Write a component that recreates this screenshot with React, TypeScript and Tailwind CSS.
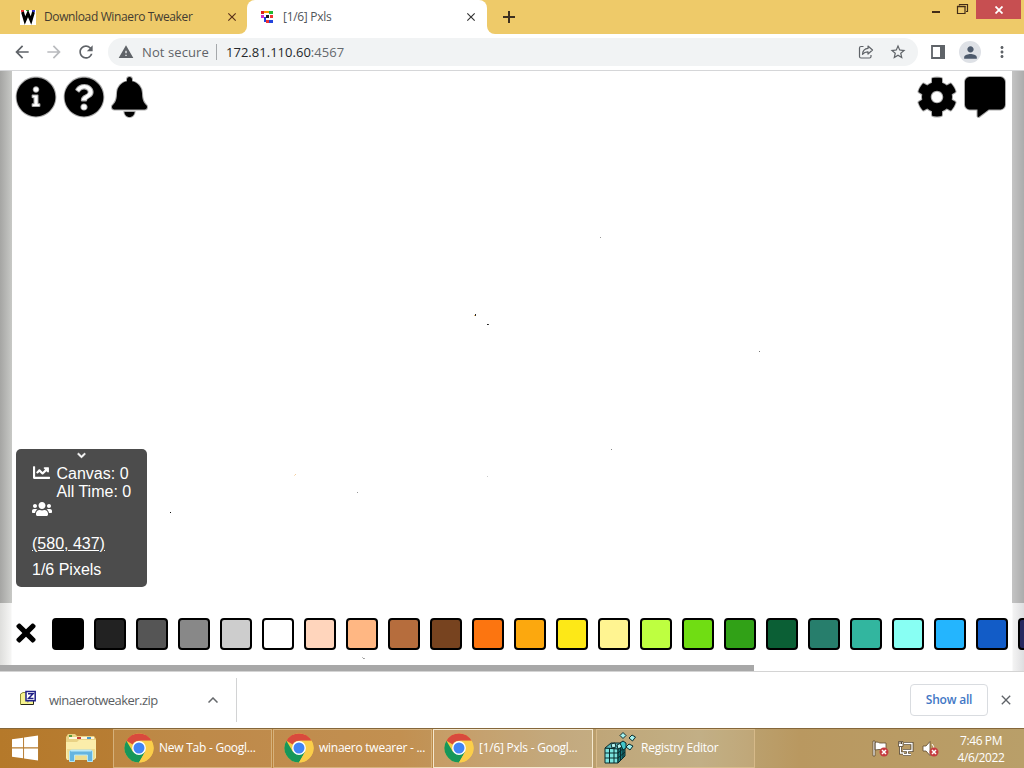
import type { ReactNode } from "react";
import {
  FaBell,
  FaChartLine,
  FaChevronDown,
  FaCog,
  FaCommentAlt,
  FaInfoCircle,
  FaQuestionCircle,
  FaTimes,
  FaUsers,
} from "react-icons/fa";
import { MdArrowBack, MdArrowForward, MdClose, MdMoreVert, MdPerson, MdRefresh, MdStarBorder, MdWarning } from "react-icons/md";

const palette = [
  "#000000", "#222222", "#555555", "#888888", "#cdcdcd", "#ffffff",
  "#ffd5bc", "#ffb783", "#b66d3d", "#77431f", "#fc7510", "#fca80e",
  "#fde817", "#fff491", "#beff40", "#70dd13", "#31a117", "#0b5f35",
  "#277e6c", "#32b69f", "#88fff3", "#24b5fe", "#125cc7", "#262960",
];

const pixels = [
  { x: 600, y: 237, color: "#999" },
  { x: 475, y: 314, color: "#222" },
  { x: 475, y: 315, color: "#333" },
  { x: 474, y: 315, color: "#eebb66" },
  { x: 487, y: 324, color: "#222" },
  { x: 488, y: 324, color: "#444" },
  { x: 759, y: 351, color: "#777" },
  { x: 611, y: 449, color: "#888" },
  { x: 295, y: 474, color: "#f5cfa0" },
  { x: 294, y: 475, color: "#fae0c0" },
  { x: 487, y: 476, color: "#ccc" },
  { x: 357, y: 492, color: "#999" },
  { x: 170, y: 512, color: "#111" },
  { x: 362, y: 657, color: "#bbb" },
  { x: 363, y: 658, color: "#999" },
  { x: 364, y: 658, color: "#aaa" },
];

function WinaeroIcon() {
  return (
    <svg className="w-4 h-4 shrink-0" viewBox="0 0 16 16">
      <path fill="#fff" d="M0 1h16v15H0z" />
      <path fill="#e33" d="M1 1h3v2H1z" />
      <path fill="#3b3" d="M6 1h3v1H6z" />
      <path fill="#33c" d="M12 1h3v2h-3z" />
      <path fill="none" stroke="#000" strokeWidth="2.9" d="M2.500 3l2.500 8.500L8 4.500l3 7L13.500 3" />
    </svg>
  );
}

function PxlsIcon() {
  return (
    <svg className="w-3 h-3 shrink-0" viewBox="0 0 12 12">
      <path fill="#d22" d="M0 0h3v3H0z" />
      <path fill="#f90" d="M3 0h5v2H3z" />
      <path fill="#2b3" d="M8 0h4v3H8z" />
      <path fill="#c3c" d="M0 4h3v3H0z" />
      <path fill="#24d" d="M3 6h2v5H3zM8 9h4v3H8z" />
      <path fill="#222" d="M5 4h3v3H5z" />
      <path fill="#e33" d="M9 4h3v3H9zM5 9h3v3H5z" />
    </svg>
  );
}

function ChromeIcon() {
  return (
    <svg className="w-[30px] h-[30px] shrink-0" viewBox="0 0 30 30">
      <circle cx="15" cy="15" r="14.5" fill="#f9cb45" />
      <path fill="#d94a3d" d="M2.4 7.7A14.5 14.5 0 0 1 27.6 7.7H15a7.3 7.3 0 0 0-6.3 3.7z" />
      <path fill="#16975a" d="M2.4 7.7A14.5 14.5 0 0 0 15 29.5L21.3 18.6H15L8.7 18.6z" />
      <path fill="#fbce4a" d="M27.6 7.7A14.5 14.5 0 0 1 15 29.5L21.3 18.6A7.3 7.3 0 0 0 15 7.7z" />
      <circle cx="15" cy="15" r="6.9" fill="#fff" />
      <circle cx="15" cy="15" r="5.5" fill="#4285f4" />
    </svg>
  );
}

function WindowsIcon() {
  return (
    <svg className="w-[27px] h-[26px]" viewBox="0 0 28 26" fill="#fff">
      <path d="M0 4l11.500-1.700v10H0zM12.500 2.100L27 0v12.300H12.500zM0 13.500h11.500v10L0 22zM12.500 13.500H27V26l-14.500-2.200z" />
    </svg>
  );
}

function FolderIcon() {
  return (
    <svg className="w-8 h-[30px]" viewBox="0 0 32 30">
      <path fill="#e9d285" d="M1 4l2-3h7l2 2h17l2 3v19H1z" />
      <path fill="#fff8dd" d="M4 4h25v2H4z" />
      <path fill="#5b9a3c" d="M4 2h3v2H4z" />
      <path fill="#c7443a" d="M12 4h4v2h-4z" />
      <path fill="#4a99c9" d="M22 4h4v2h-4z" />
      <path fill="#fbedaa" d="M1 9h11l2-2h17v18l-2 2H2l-1-2z" />
      <path fill="#eedd91" d="M2 16h28v9l-2 2H3z" />
      <path fill="#65b4e0" stroke="#b5e7f7" d="M4.500 28.500V19q0-2 2-2h19q2 0 2 2v9.500h-5V22h-13v6.500z" />
      <path fill="#bce9f8" d="M6 17h20v1.500H6z" />
    </svg>
  );
}

function RegistryIcon() {
  return (
    <svg className="w-8 h-8 shrink-0" viewBox="0 0 32 32" stroke="#082b2c" strokeWidth="1" strokeLinejoin="round">
      <path fill="#7be3df" d="M1 16h13v15H1z" />
      <path fill="#187779" d="M14 17l7-6v13l-7 7z" />
      <path fill="#5cb9bd" d="M1 16l6-5 14 0-7 6z" />
      <path fill="none" d="M5.500 16v15M10 16v15M1 21h13l7-6M1 26h13l7-6M16.500 15v13M19 13v13" />
      <path fill="#b6f5f0" d="M7 12l4-1 1 4-4 1zM13 13l4-2 1 4-4 2z" />
      <path fill="#a5f2f0" d="M16 3.500l3-3 3 3-3 3zM25 6l3-3 3.500 2-3 4zM22 15l3-3 4 2-3 4z" />
      <path fill="#43c5c9" d="M16 11l3-2 3 2v5l-3 2z" />
    </svg>
  );
}

function ZipIcon() {
  return (
    <svg className="w-4 h-4 shrink-0" viewBox="0 0 16 16">
      <path fill="#f6f390" stroke="#8b8b35" d="M.5 4L3 2.500h5V14.500H.5z" />
      <path fill="#f6f390" stroke="#26261a" d="M1 14.500h12.500V11" />
      <path fill="#fff" stroke="#202087" strokeWidth="1.500" d="M6 1.500h9.200v9.200H6z" />
      <path fill="none" stroke="#202087" strokeWidth="1.500" d="M8 3.700h5L8.500 8.500h5" />
    </svg>
  );
}

function RedBadge() {
  return (
    <g>
      <circle cx="12" cy="12" r="4.500" fill="#c63d40" />
      <path stroke="#fff" strokeWidth="1.500" d="M10 10l4 4M14 10l-4 4" />
    </g>
  );
}

function TrayIcons() {
  return (
    <div className="flex items-center gap-2">
      <svg className="w-[17px] h-[17px]" viewBox="0 0 17 17">
        <path fill="#fff" stroke="#5e4a30" strokeWidth=".8" d="M1 1h2v15H1zM3 2.500c3-1.500 4 1 6 .5 2 0 3 0 5 0v7c-4 1-4-1-7-.5L3 10z" />
        <RedBadge />
      </svg>
      <svg className="w-[17px] h-[17px]" viewBox="0 0 17 17" fill="none">
        <path stroke="#574832" strokeWidth="3" d="M7 3.500h8v7H6M10.500 11v3M6 14.500h8M3.500 7v6H7" />
        <path stroke="#fff" strokeWidth="1.300" d="M7 3.500h8v7H6M10.500 11v3M6 14.500h8M3.500 7v6H7" />
        <path fill="#fff" stroke="#574832" strokeWidth=".8" d="M1.500 1.500h4.500v5H1.500z" />
        <path stroke="#574832" d="M3 2v2M4.500 2v2" />
      </svg>
      <svg className="w-[17px] h-[17px]" viewBox="0 0 17 17">
        <path fill="#fff" stroke="#5e4a30" strokeWidth=".8" d="M1 6h3l4-4.500v14L4 11H1z" />
        <path fill="none" stroke="#fff" d="M10 4q2 2 2 5" />
        <RedBadge />
      </svg>
    </div>
  );
}

function BrowserTabs() {
  return (
    <div className="h-[34px] flex bg-white text-[#443c31] text-[12px]">
      <div className="w-[247px] flex items-center pl-5 pr-2 bg-[#eeca69] rounded-br-lg">
        <WinaeroIcon />
        <span className="ml-2 grow whitespace-nowrap tracking-[-0.37px]">Download Winaero Tweaker</span>
        <MdClose className="w-3.5 h-3.5 text-[#59301b]" />
      </div>
      <div className="w-[240px] bg-[#eeca69]">
        <div className="h-full flex items-center pl-[14px] pr-[9px] bg-white rounded-t-lg text-[#51555a]">
          <PxlsIcon />
          <span className="ml-2.5 grow tracking-[-0.3px]">[1/6] Pxls</span>
          <MdClose className="w-3.5 h-3.5 text-[#333]" />
        </div>
      </div>
      <div className="grow flex bg-[#eeca69] rounded-bl-lg">
        <svg className="w-3.5 h-3.5 mt-[10px] ml-[15px]" viewBox="0 0 14 14">
          <path stroke="#3d3020" strokeWidth="2" d="M7 1v12M1 7h12" />
        </svg>
        <div className="ml-auto mr-[3px] flex">
          <svg className="w-10 h-[19px]" viewBox="0 0 40 19" fill="none" stroke="#422c18">
            <path strokeWidth="2" d="M0 12h8" />
            <path strokeWidth="1.200" d="M25.500 6.500h7.500v7h-7.500zM27.500 5.500V4.500h8v7H34" />
            <path strokeWidth="1.500" d="M25 6.500h8.500" />
          </svg>
          <div className="w-[45px] h-[19px] ml-1 flex justify-center items-center bg-[#c74f51]">
            <svg className="w-2 h-2" viewBox="0 0 8 8" stroke="#fff" strokeWidth="1.800">
              <path d="M.5.5l7 7M7.500.5l-7 7" />
            </svg>
          </div>
        </div>
      </div>
    </div>
  );
}

function Toolbar() {
  return (
    <div className="h-[37px] flex items-center bg-white border-b border-[#d5d6d8] text-[#5f6368]">
      <MdArrowBack className="w-5 h-5 ml-3 shrink-0" />
      <MdArrowForward className="w-5 h-5 ml-3 shrink-0 text-[#b9bbbe]" />
      <MdRefresh className="w-5 h-5 ml-3 shrink-0" />
      <div className="h-7 grow ml-3 rounded-full bg-[#f1f3f4] flex items-center pl-[10px] pr-[11px]">
        <MdWarning className="w-4 h-4" />
        <span className="ml-2 mt-px w-[67px] whitespace-nowrap text-[13px] tracking-[0.1px]">Not secure</span>
        <span className="ml-[7px] w-px h-4 bg-[#a5a8ab]" />
        <span className="ml-[9px] mt-px text-[13px] tracking-[0.02px] text-[#25282b]">
          172.81.110.60<span className="text-[#65696d]">:4567</span>
        </span>
        <svg className="w-4 h-4 ml-auto" viewBox="0 0 16 16" fill="none" stroke="currentColor" strokeWidth="1.200" strokeLinejoin="round">
          <path d="M5.500 2.500H3Q1.500 2.500 1.500 4v8.500Q1.500 14 3 14h8.500q1.500 0 1.500-1.500V11" />
          <path d="M10 2l4.500 4-4.500 4V7.800C7.500 7.600 6 8.500 4.500 10.300 4.700 7 6.800 4.700 10 4.400z" />
        </svg>
        <MdStarBorder className="w-[18px] h-[18px] ml-[15px]" />
      </div>
      <svg className="w-3.5 h-3.5 ml-[13px]" viewBox="0 0 14 14">
        <path fill="none" stroke="currentColor" strokeWidth="1.800" d="M1 1h12v12H1z" />
        <path fill="currentColor" d="M9 0h5v14H9z" />
      </svg>
      <div className="w-[22px] h-[22px] ml-[14px] rounded-full bg-[#dee1e6] flex items-center justify-center">
        <MdPerson className="w-[19px] h-[19px] text-[#4d5a6c]" />
      </div>
      <MdMoreVert className="w-[18px] h-[18px] ml-[12px] mr-[13px]" />
    </div>
  );
}

const overlayIcon = "overflow-visible [paint-order:stroke] stroke-[#aaa] [stroke-width:26px]";

function StatsPanel() {
  return (
    <div className="w-[131px] h-[138px] ml-4 rounded-[5px] bg-[#4c4c4c] text-white text-[16px] leading-[18px] whitespace-nowrap">
      <div className="h-4 flex justify-center pt-[2px]">
        <FaChevronDown className="w-[9px] h-[9px] stroke-white [stroke-width:40px]" />
      </div>
      <div className="flex pl-[17px]">
        <FaChartLine className="w-[17px] h-[17px] -mt-px" />
        <div className="ml-[6.5px]">
          <div>Canvas: 0</div>
          <div>All Time: 0</div>
        </div>
      </div>
      <FaUsers className="w-5 h-5 ml-4 -mt-[2px]" />
      <div className="pl-4 mt-4 underline">(580, 437)</div>
      <div className="pl-4 mt-2">1/6 Pixels</div>
    </div>
  );
}

function Board() {
  return (
    <div className="h-[532px] flex">
      <div className="w-3 shrink-0 bg-linear-to-r from-[#a5a5a3] to-[#c8c9c6]" />
      <div className="grow flex flex-col bg-white">
        <div className="pl-1 pr-[7px] pt-1.5 flex items-start">
          <FaInfoCircle className={`${overlayIcon} w-10 h-10`} />
          <FaQuestionCircle className={`${overlayIcon} w-10 h-10 ml-2`} />
          <FaBell className={`${overlayIcon} w-[35px] h-10 ml-2`} />
          <FaCog className={`${overlayIcon} w-10 h-10 ml-auto`} />
          <FaCommentAlt className={`${overlayIcon} w-10 h-10 ml-2`} />
        </div>
        <div className="mt-auto mb-4 -ml-3">
          <StatsPanel />
        </div>
      </div>
      <div className="w-3 shrink-0 bg-linear-to-r from-[#c4c4c4] to-[#acacac]" />
    </div>
  );
}

function Palette() {
  return (
    <div className="h-[69px] flex flex-col bg-[linear-gradient(90deg,#dededc_0,#f5f5f4_11px,#fff_12px,#fff_1012px,#f3f3f3_1013px,#dedee0_1024px)]">
      <div className="h-[62px] flex items-center gap-[10px] pl-4 overflow-hidden">
        <FaTimes className="w-5 h-7 -mt-[3px] mr-1.5 shrink-0" />
        {palette.map((color) => (
          <div
            key={color}
            className="w-8 h-8 shrink-0 rounded-[4px] border-2 border-black"
            style={{ backgroundColor: color }}
          />
        ))}
      </div>
      <div className="w-[754px] h-1.5 bg-[#a8a8a8]" />
      <div className="h-px bg-[#d4d4d4]" />
    </div>
  );
}

function Downloads() {
  return (
    <div className="h-14 flex items-center bg-white">
      <div className="w-[237px] h-11 pl-5 pr-[18px] flex items-center border-r border-[#d2d3d4] text-[#5b5e62]">
        <div className="-mt-1">
          <ZipIcon />
        </div>
        <span className="ml-[13px] mt-px text-[13px] tracking-[-0.54px]">winaerotweaker.zip</span>
        <svg className="w-2.5 h-1.5 ml-auto" viewBox="0 0 10 6" fill="none" stroke="#65686b" strokeWidth="1.500">
          <path d="M.5 5.500L5 1l4.500 4.500" />
        </svg>
      </div>
      <button className="w-[78px] h-8 -mt-px ml-auto rounded border border-[#d9dce0] text-[12px] font-semibold tracking-[-0.2px] text-[#4277c5]">
        Show all
      </button>
      <MdClose className="w-4 h-4 -mt-px ml-[10px] mr-[10px] text-[#5f6368]" />
    </div>
  );
}

function Task({ icon, active, className, children }: { icon: ReactNode; active?: boolean; className?: string; children: string }) {
  return (
    <div
      className={`h-[39px] mr-px flex items-center border pb-[2px] whitespace-nowrap tracking-[-0.25px] ${active ? "w-[160px] border-[#f4e8cf] bg-white/15" : "w-[159px] border-[#dfc292]/70 bg-white/8"} ${className ?? "pl-[10px]"}`}
    >
      {icon}
      <span className="ml-[5px]">{children}</span>
    </div>
  );
}

function Taskbar() {
  return (
    <div className="h-10 flex items-center border-t border-[#85673b] text-white text-[12px] bg-[linear-gradient(90deg,#b5792a_0,#b9803a_200px,#bd8743_400px,#b99b68_560px,#bda97c_700px,#b99860_800px,#b99f69_1024px)]">
      <div className="w-[113px] flex items-center pb-[2px] pl-3 gap-[26px]">
        <WindowsIcon />
        <FolderIcon />
      </div>
      <Task icon={<ChromeIcon />}>New Tab - Googl...</Task>
      <Task icon={<ChromeIcon />}>winaero twearer - ...</Task>
      <Task icon={<ChromeIcon />} active>[1/6] Pxls - Googl...</Task>
      <Task icon={<RegistryIcon />} className="ml-[2px] pl-[7px]">Registry Editor</Task>
      <div className="ml-auto mr-[18px] flex items-center gap-[17px]">
        <TrayIcons />
        <div className="w-[50px] flex flex-col items-center leading-[17px] tracking-[-0.4px] whitespace-nowrap">
          <span>7:46 PM</span>
          <span>4/6/2022</span>
        </div>
      </div>
    </div>
  );
}

export default function App() {
  return (
    <div className="relative w-[1024px] h-[768px] flex flex-col overflow-hidden bg-white font-['Open_Sans',sans-serif]">
      <BrowserTabs />
      <Toolbar />
      <main className="font-['Liberation_Sans',sans-serif] text-black">
        <Board />
        <Palette />
      </main>
      <Downloads />
      <Taskbar />
      {/* Placed pixels on the canvas */}
      {pixels.map((p) => (
        <i
          key={`${p.x}-${p.y}`}
          className="absolute w-px h-px"
          style={{ left: p.x, top: p.y, backgroundColor: p.color }}
        />
      ))}
    </div>
  );
}
